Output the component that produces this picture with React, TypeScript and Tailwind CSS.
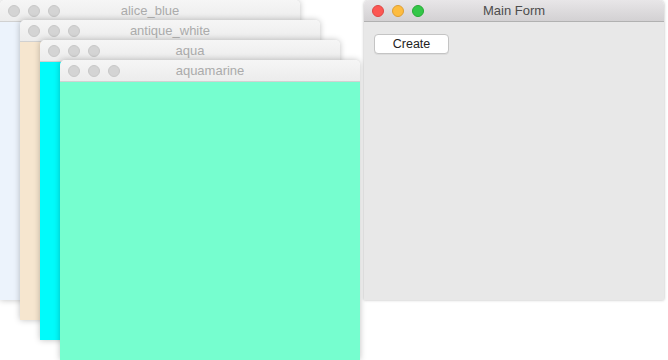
import React from 'react';

type Win = { title: string; color: string; pos: string };

const colorWindows: Win[] = [
    { title: 'alice_blue', color: 'bg-[#ecf3fc]', pos: 'left-0 top-0' },
    { title: 'antique_white', color: 'bg-[#f6e6cf]', pos: 'left-[20px] top-[20px]' },
    { title: 'aqua', color: 'bg-[#00fbfb]', pos: 'left-[40px] top-[40px]' },
    { title: 'aquamarine', color: 'bg-[#76fecf]', pos: 'left-[60px] top-[60px]' },
];

// three little window buttons; grey when the window is not focused
const Lights = ({ active }: { active: boolean }) => (
    <div className="flex gap-[8px] pl-[8px]">
        <span className={`w-[12px] h-[12px] rounded-full ${active ? 'bg-[#fc5753] border border-[#df4744]' : 'bg-[#d4d4d4] border border-[#c8c8c8]'}`} />
        <span className={`w-[12px] h-[12px] rounded-full ${active ? 'bg-[#fdbc40] border border-[#de9f34]' : 'bg-[#d4d4d4] border border-[#c8c8c8]'}`} />
        <span className={`w-[12px] h-[12px] rounded-full ${active ? 'bg-[#33c748] border border-[#27aa35]' : 'bg-[#d4d4d4] border border-[#c8c8c8]'}`} />
    </div>
);

const TitleBar = ({ title, active }: { title: string; active: boolean }) => (
    <div
        className={`relative h-[22px] shrink-0 flex items-center rounded-t-[5px] border-b ${
            active
                ? 'bg-gradient-to-b from-[#e8e6e8] to-[#d3d1d3] border-[#b1b1b1]'
                : 'bg-gradient-to-b from-[#f6f6f6] to-[#ececec] border-[#d1d1d1]'
        }`}
    >
        <Lights active={active} />
        <span
            className={`absolute inset-0 flex items-center justify-center text-[13px] ${
                active ? 'text-[#4d4d4d]' : 'text-[#ababab]'
            }`}
        >
            {title}
        </span>
    </div>
);

export default function App() {
    return (
        <div className="relative w-[668px] h-[360px] bg-white overflow-hidden font-['Liberation_Sans',Arial,sans-serif]">
            {colorWindows.map((w) => (
                <div
                    key={w.title}
                    className={`absolute ${w.pos} w-[300px] h-[300px] flex flex-col rounded-t-[5px] shadow-[0_0_6px_rgba(0,0,0,0.25)]`}
                >
                    <TitleBar title={w.title} active={false} />
                    <div className={`flex-1 ${w.color}`} />
                </div>
            ))}

            <div className="absolute left-[364px] top-0 w-[300px] h-[300px] flex flex-col rounded-t-[5px] shadow-[0_0_3px_rgba(0,0,0,0.3)]">
                <TitleBar title="Main Form" active={true} />
                <div className="flex-1 bg-[#e8e8e8] pt-[12px] pl-[10px]">
                    <button className="block w-[75px] h-[20px] bg-white border border-[#c4c4c4] rounded-[4px] text-[12.5px] text-[#222] leading-none shadow-[0_1px_0_rgba(0,0,0,0.05)]">
                        Create
                    </button>
                </div>
            </div>
        </div>
    );
}
